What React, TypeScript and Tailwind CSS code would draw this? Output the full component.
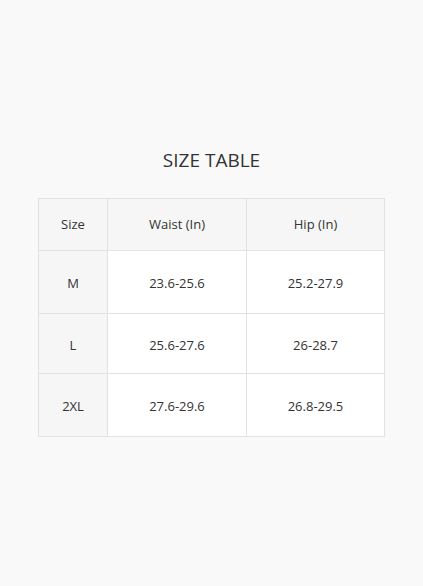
import React from 'react'

const rows = [
  { size: 'M', waist: '23.6-25.6', hip: '25.2-27.9', h: 'h-[63px]' },
  { size: 'L', waist: '25.6-27.6', hip: '26-28.7', h: 'h-[60px]' },
  { size: '2XL', waist: '27.6-29.6', hip: '26.8-29.5', h: 'h-[63px]' }
]

const App: React.FC = () => {
  return (
    <div
      className="min-h-[586px] w-full bg-[#f9f9f9] pt-[146px] text-[#333]"
      style={{ fontFamily: '"Open Sans", "Liberation Sans", sans-serif' }}
    >
      <h2 className="text-center text-[19px] leading-[28px] font-normal">SIZE TABLE</h2>
      <table className="mx-auto mt-[24px] w-[346px] table-fixed border-collapse border border-[#dedede] text-[13px]">
        <colgroup>
          <col className="w-[69px]" />
          <col className="w-[139px]" />
          <col className="w-[138px]" />
        </colgroup>
        <thead>
          <tr className="h-[52px] bg-[#f6f6f6]">
            <th className="border border-[#e2e2e2] font-normal">Size</th>
            <th className="border border-[#e2e2e2] font-normal">Waist (In)</th>
            <th className="border border-[#e2e2e2] font-normal">Hip (In)</th>
          </tr>
        </thead>
        <tbody>
          {rows.map(r => (
            <tr key={r.size} className={r.h}>
              <td className="border border-[#e2e2e2] bg-[#f6f6f6] pt-[4px] text-center">{r.size}</td>
              <td className="border border-[#e2e2e2] bg-white pt-[4px] text-center">{r.waist}</td>
              <td className="border border-[#e2e2e2] bg-white pt-[4px] text-center">{r.hip}</td>
            </tr>
          ))}
        </tbody>
      </table>
    </div>
  )
}

export default App
